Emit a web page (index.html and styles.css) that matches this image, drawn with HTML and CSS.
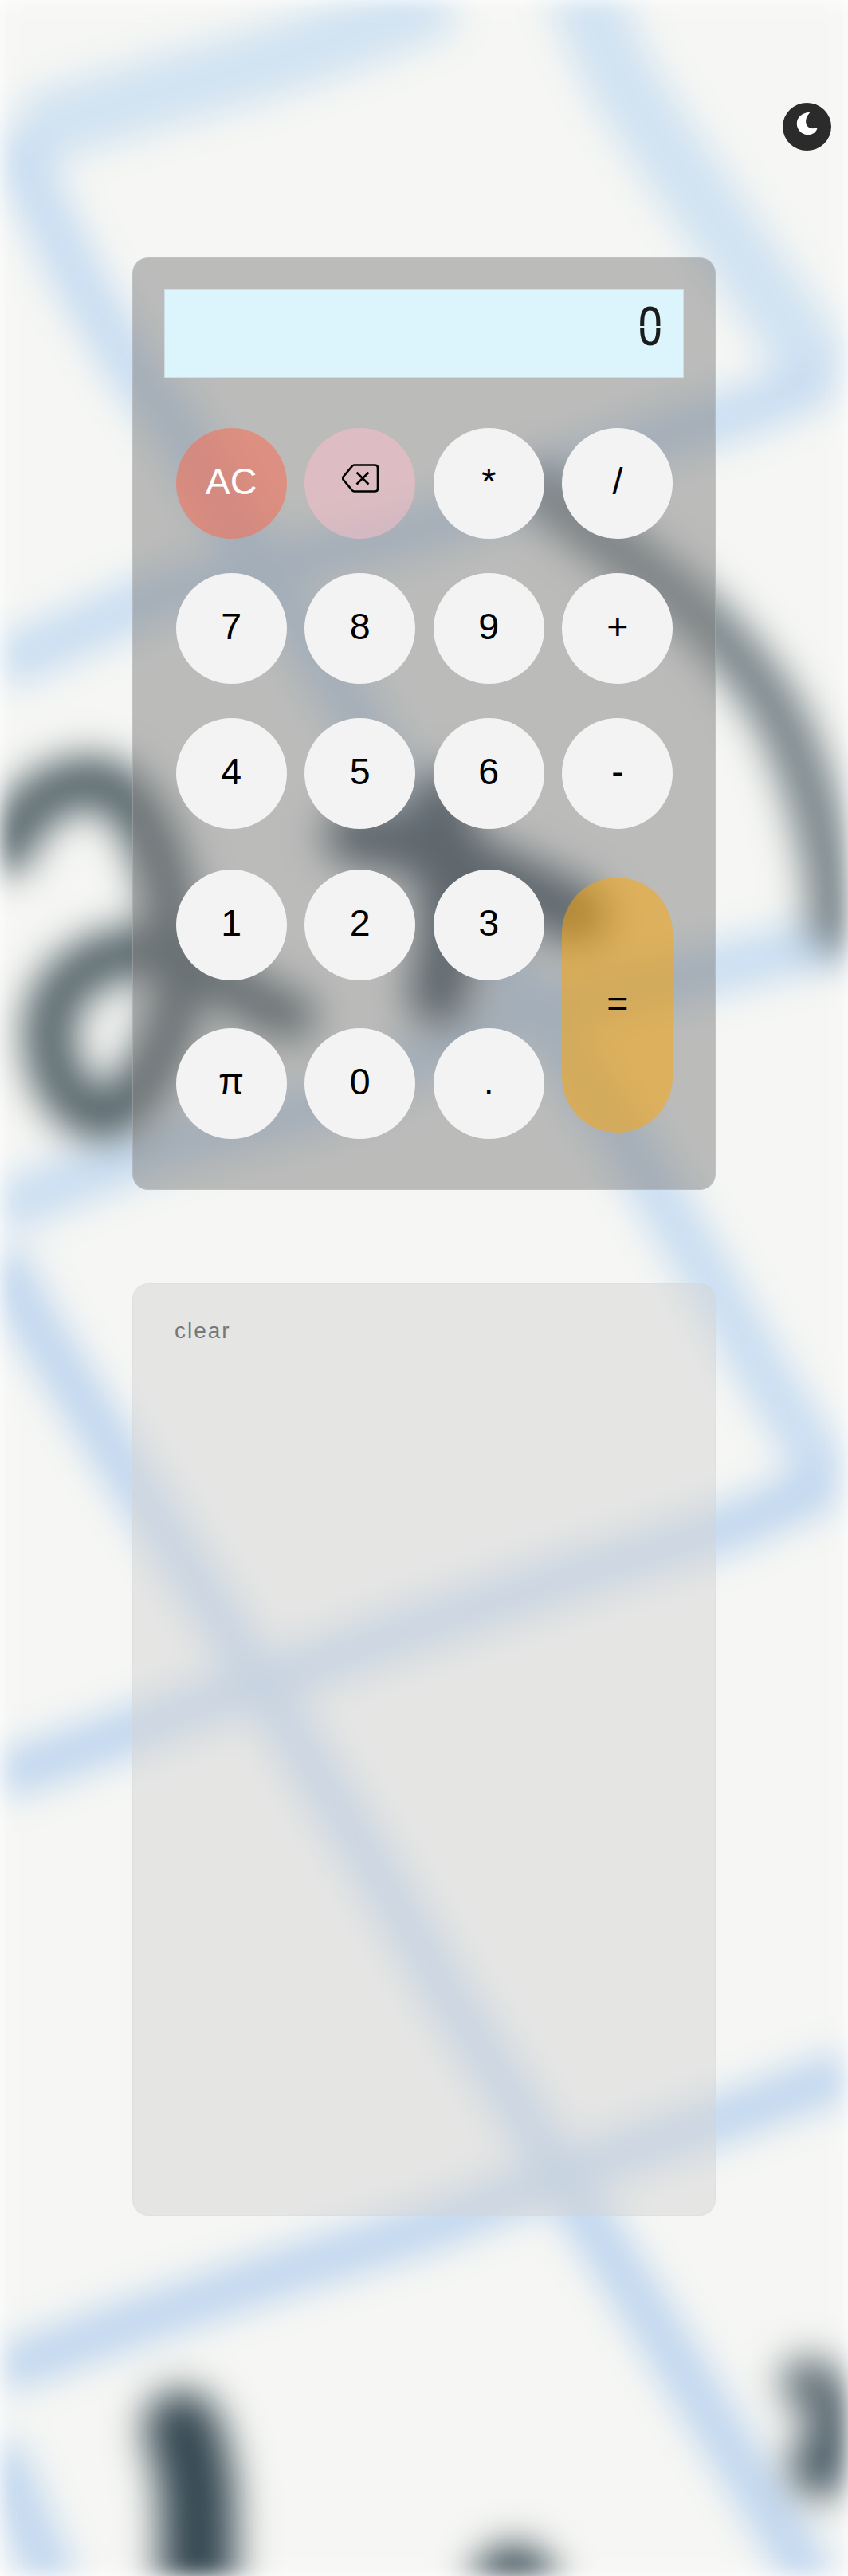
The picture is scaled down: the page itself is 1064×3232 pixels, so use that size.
FILE: index.html
```
<!DOCTYPE html>
<html lang="en">
<head>
<meta charset="utf-8">
<title>Calculator</title>
<link rel="stylesheet" href="styles.css">
</head>
<body>
<svg class="backdrop" viewBox="0 0 1064 3232" aria-hidden="true">
  <rect width="1064" height="3232" fill="#f6f7f4"/>
  <g class="grid-lines">
    <path class="pale wide" d="M560 -5Q400 65 220 110L34 165"/>
    <path class="pale" d="M30 165V210L102 357L163 459L224 540L325 710L434 876L665 1259L780 1422L882 1591L963 1732L1040 1855"/>
    <path class="pale wide" d="M725 -20L780 102L848 205L929 320L1035 475"/>
    <path class="pale" d="M1040 470Q940 520 848 540L543 660L204 745L0 835"/>
    <path class="pale" d="M1064 1175L916 1212L644 1275L407 1387L204 1438L68 1489L0 1520"/>
    <path d="M0 1575L34 1645L149 1830L231 1960L332 2120L434 2284L495 2386L570 2517L631 2612L706 2734L800 2882L895 3037L1000 3206L1020 3250"/>
    <path d="M1045 1860L916 1916L719 1977L502 2049L332 2110L122 2187L0 2230"/>
    <path d="M1064 2600L916 2655L746 2713L543 2793L339 2856L136 2925L0 2975M-5 3070L14 3115L70 3250"/>
  </g>
  <g class="ink">
    <path d="M680 615C740 665 780 690 814 720C890 775 945 840 980 902C1020 985 1045 1080 1047 1165" stroke="#727e83" stroke-width="62"/>
    <path d="M8 1065Q40 985 115 980C185 985 215 1110 225 1190M366 1275C320 1265 285 1225 225 1197C150 1180 68 1215 61 1290C61 1355 95 1398 129 1400C175 1393 225 1300 228 1210" stroke="#4e5e64" stroke-width="62"/>
    <path d="M445 1048L560 1065M555 1005L563 1060V1180L550 1250M575 1080L645 1110L725 1148" stroke="#3c4d59" stroke-width="76"/>
    <path d="M228 3046Q246 3090 248 3150V3270" stroke="#334650" stroke-width="94"/>
    <path d="M645 3245V3290" stroke="#334650" stroke-width="104"/>
    <path d="M1014 2990C1045 3010 1055 3035 1040 3065L1030 3095" stroke="#58676f" stroke-width="66"/>
    <circle cx="1028" cy="3097" r="22" stroke="#3f525d" stroke-width="30"/>
  </g>
</svg>

<header class="toolbar">
  <button class="theme-toggle" aria-label="Dark mode">
    <svg viewBox="0 0 27 30"><path d="M16.5 .7C7.5 1.5 .8 7 .8 15C.8 23 7 29.2 15 29.2C20.5 29.2 25 26 26.4 21.3Q25.500 20.200 24 20.800C16 22.500 11.700 17.500 12.200 11.500Q12.400 6.500 16.600 2Q17.200 1 16.500 .7Z" fill="#fff"/></svg>
  </button>
</header>

<main class="page">
  <section class="calculator">
    <output class="display"><span class="digits">0</span></output>
    <div class="keys">
      <button class="key key-clear">AC</button>
      <button class="key key-delete" aria-label="Delete"><svg viewBox="0 0 46 36"><path d="M15.500 1.500H41.500Q45 1.500 45 5V31Q45 34.500 41.500 34.500H15.500Q14 34.500 12.800 33.200L1.500 19.600Q.5 18 1.500 16.400L12.800 2.800Q14 1.500 15.500 1.500ZM18.500 10.800L33.500 25.500M33.500 10.800L18.500 25.500" fill="none" stroke="#000" stroke-width="2.600"/></svg></button>
      <button class="key">*</button>
      <button class="key">/</button>
      <button class="key">7</button>
      <button class="key">8</button>
      <button class="key">9</button>
      <button class="key">+</button>
      <button class="key">4</button>
      <button class="key">5</button>
      <button class="key">6</button>
      <button class="key">-</button>
      <button class="key">1</button>
      <button class="key">2</button>
      <button class="key">3</button>
      <button class="key key-equals">=</button>
      <button class="key">π</button>
      <button class="key">0</button>
      <button class="key">.</button>
    </div>
  </section>

  <section class="history">
    <button class="history-clear">clear</button>
  </section>
</main>
</body>
</html>
```
FILE: styles.css
```
* {
  box-sizing: border-box;
}

body {
  margin: 0;
  height: 3232px;
  position: relative;
  overflow: hidden;
  background: #fff;
  font-family: "Liberation Sans", Arial, sans-serif;
}

button {
  margin: 0;
  border: 0;
  padding: 0;
  font-family: inherit;
  cursor: pointer;
}

.backdrop {
  position: absolute;
  inset: 0;
  z-index: -1;
  width: 1064px;
  height: 3232px;
  overflow: hidden;
  filter: blur(12px);
}

.grid-lines {
  fill: none;
  stroke: #b9d2ee;
  stroke-width: 54px;
  stroke-linejoin: round;
  filter: blur(21px);
}

.grid-lines .pale {
  stroke: #c5dbf1;
  stroke-width: 60px;
}

.grid-lines .wide {
  stroke: #d0e2f1;
  stroke-width: 88px;
}

.ink {
  fill: none;
  stroke-linecap: round;
  stroke-linejoin: round;
  filter: blur(22px);
}

.toolbar {
  display: flex;
  justify-content: flex-end;
  height: 323px;
  padding: 129px 21px 0 0;
}

.theme-toggle {
  display: flex;
  justify-content: center;
  width: 61px;
  height: 60px;
  padding-top: 11px;
  border-radius: 50%;
  background: #2b2b2b;
}

.theme-toggle svg {
  width: 27px;
  height: 30px;
}

.page {
  display: flex;
  flex-direction: column;
  align-items: center;
  gap: 117px;
}

.calculator,
.history {
  width: 732px;
  height: 1170px;
  border: 1px solid rgba(211, 211, 211, 0.3);
  border-radius: 20px;
}

.calculator {
  padding: 39px;
  background: rgba(128, 128, 128, 0.5);
}

.display {
  display: flex;
  justify-content: flex-end;
  height: 111px;
  padding: 0 22px 0 0;
  border: 1px solid #cddfe4;
  background: #dcf5fd;
}

.digits {
  height: 92px;
  font: 400 67px/92px Roboto, sans-serif;
  color: transparent;
  background: linear-gradient(#1c1c1c 45px, transparent 45px, transparent 48px, #1c1c1c 48px);
  -webkit-background-clip: text;
  background-clip: text;
  transform: scaleX(0.84);
}

.keys {
  display: grid;
  grid-template-columns: repeat(4, 161.600px);
  grid-template-rows: 182px 182px 182px 199px 198px;
  justify-content: center;
  justify-items: center;
  align-items: center;
  margin-top: 41px;
  padding-left: 1px;
}

.key {
  display: flex;
  align-items: center;
  justify-content: center;
  width: 139px;
  height: 139px;
  padding-bottom: 5px;
  border-radius: 70px;
  background: #f3f3f3;
  color: #000;
  font-size: 46.500px;
}

.key-clear {
  background: rgba(255, 99, 71, 0.5);
  color: #fff;
}

.key-delete {
  padding-bottom: 13px;
  background: rgba(255, 192, 203, 0.5);
}

.key-delete svg {
  width: 46px;
  height: 36px;
}

.key-equals {
  grid-row: 4 / span 2;
  grid-column: 4;
  height: 320px;
  margin-top: 3px;
  background: rgba(255, 165, 0, 0.5);
}

.history {
  padding: 43px 52px;
  background: rgba(211, 211, 211, 0.5);
}

.history-clear {
  background: none;
  color: #777;
  font-size: 28px;
  line-height: 32px;
  letter-spacing: 2px;
}
```
